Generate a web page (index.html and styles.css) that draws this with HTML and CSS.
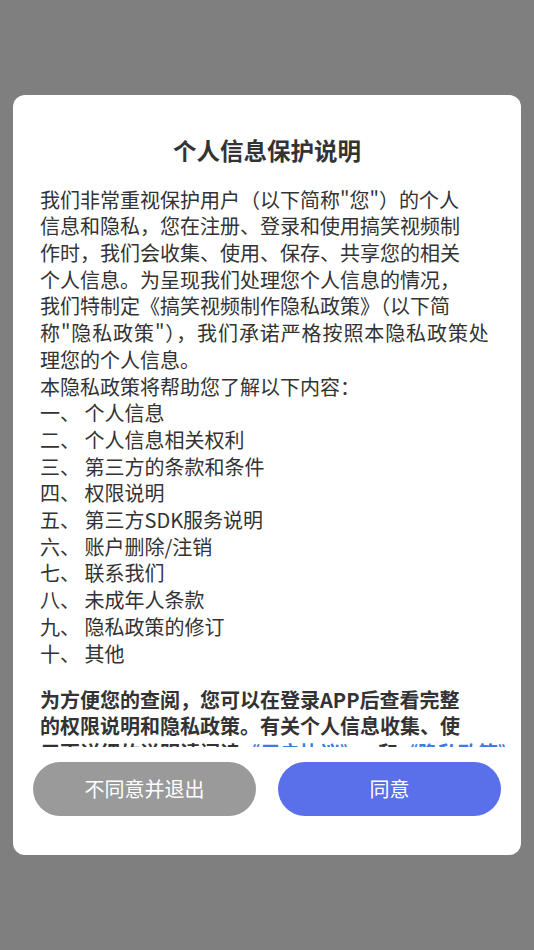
FILE: index.html
```html
<!DOCTYPE html>
<html lang="zh-CN">
<head>
<meta charset="utf-8">
<title>个人信息保护说明</title>
<link rel="stylesheet" href="styles.css">
</head>
<body>
<div class="dialog">
  <h1 class="title">个人信息保护说明</h1>
  <div class="content">
    <p class="para">
      <span class="ln">我们非常重视保护用户（以下简称"您"）的个人</span>
      <span class="ln">信息和隐私，您在注册、登录和使用搞笑视频制</span>
      <span class="ln">作时，我们会收集、使用、保存、共享您的相关</span>
      <span class="ln">个人信息。为呈现我们处理您个人信息的情况，</span>
      <span class="ln">我们特制定《搞笑视频制作隐私政策》（以下简</span>
      <span class="ln wide">称"隐私政策"），我们承诺严格按照本隐私政策处</span>
      <span class="ln">理您的个人信息。</span>
      <span class="ln">本隐私政策将帮助您了解以下内容：</span>
      <span class="ln">一、 个人信息</span>
      <span class="ln">二、 个人信息相关权利</span>
      <span class="ln">三、 第三方的条款和条件</span>
      <span class="ln">四、 权限说明</span>
      <span class="ln">五、 第三方SDK服务说明</span>
      <span class="ln">六、 账户删除/注销</span>
      <span class="ln">七、 联系我们</span>
      <span class="ln">八、 未成年人条款</span>
      <span class="ln">九、 隐私政策的修订</span>
      <span class="ln">十、 其他</span>
    </p>
    <p class="para bold">
      <span class="ln">为方便您的查阅，您可以在登录APP后查看完整</span>
      <span class="ln">的权限说明和隐私政策。有关个人信息收集、使</span>
      <span class="ln">用更详细的说明请阅读<span class="link">《用户协议》</span><span class="and">和</span><span class="link">《隐私政策》</span></span>
    </p>
  </div>
  <div class="actions">
    <button class="btn btn-cancel">不同意并退出</button>
    <button class="btn btn-ok">同意</button>
  </div>
</div>
</body>
</html>
```

FILE: styles.css
```css
html, body {
  margin: 0;
  padding: 0;
}
body {
  background: #7f7f7f;
  width: 534px;
  height: 950px;
  overflow: hidden;
  font-family: "Noto Sans CJK SC", "Noto Sans", sans-serif;
}
.dialog {
  margin: 95px 13px 0;
  height: 760px;
  background: #ffffff;
  border-radius: 12px;
  display: flex;
  flex-direction: column;
  box-sizing: border-box;
}
.title {
  margin: 38px 0 0;
  font-size: 23.5px;
  line-height: 34px;
  font-weight: bold;
  color: #333333;
  text-align: center;
}
.content {
  margin: 19.6px 0 0 27px;
  height: 560px;
  overflow: hidden;
  color: #333333;
  font-size: 20px;
  line-height: 26.7px;
}
.para {
  margin: 0;
}
.para + .para {
  margin-top: 19.4px;
}
.ln {
  display: block;
  white-space: nowrap;
}
.wide {
  letter-spacing: 0.9px;
}
.bold {
  font-weight: bold;
}
.link {
  color: #3a7be6;
}
.and {
  margin-left: 18px;
}
.actions {
  display: flex;
  gap: 22px;
  padding: 15px 20px 0;
}
.btn {
  flex: 1;
  height: 54px;
  border: none;
  border-radius: 27px;
  color: #ffffff;
  font-family: "Noto Sans CJK SC", "Noto Sans", sans-serif;
  font-size: 20px;
  padding: 0;
}
.btn-cancel {
  background: #9a9a9a;
}
.btn-ok {
  background: #5a6fea;
}
```
